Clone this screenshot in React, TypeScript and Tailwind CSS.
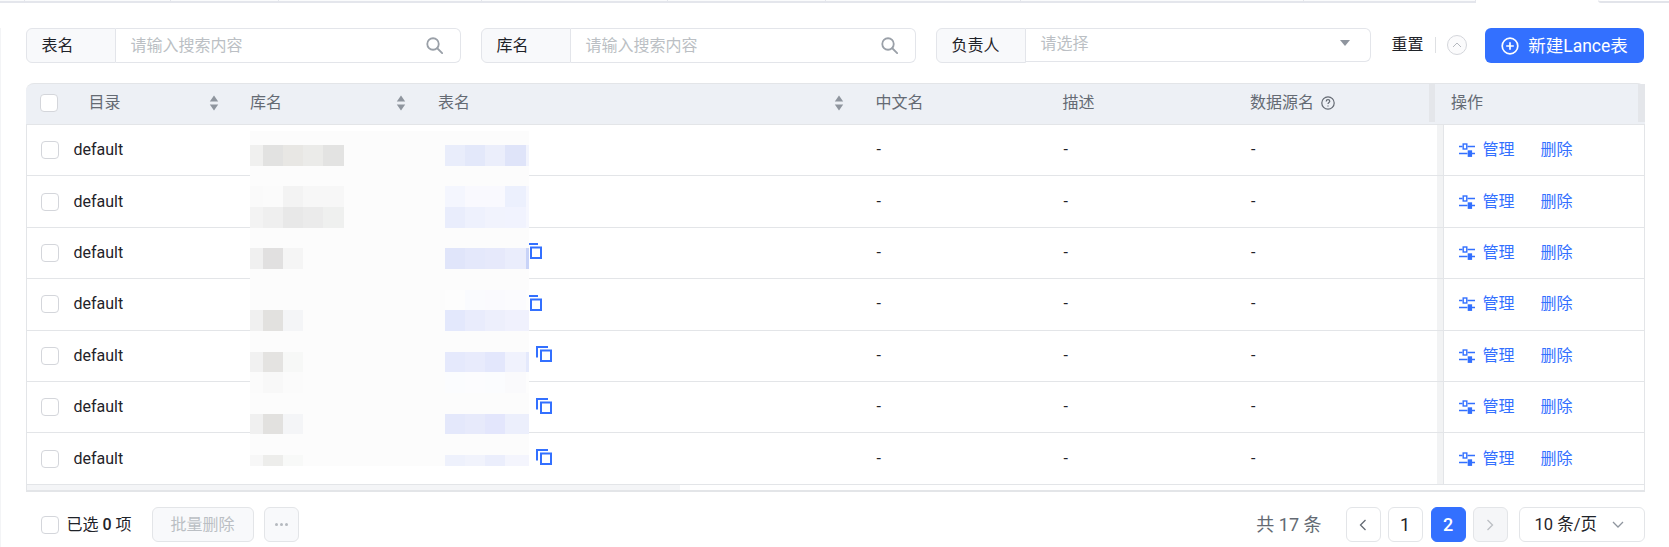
import React from "react";

const BLUE = "#3370ff";

function SearchIcon() {
  return (
    <svg width="17" height="17" viewBox="0 0 16 16" fill="none" stroke="#9aa0a8" strokeWidth="1.7" className="shrink-0">
      <circle cx="6.6" cy="6.6" r="5.4" />
      <path d="M10.6 10.6 15.2 15.2" strokeLinecap="round" />
    </svg>
  );
}

function SortIcon() {
  return (
    <svg width="10" height="16" viewBox="0 0 10 16" fill="#8f959e" className="shrink-0">
      <path d="M5 0.5 9.2 6.5H0.8Z" />
      <path d="M0.8 9.5H9.2L5 15.5Z" />
    </svg>
  );
}

function Checkbox({ className = "" }: { className?: string }) {
  return <span className={"block h-[18px] w-[18px] shrink-0 rounded-[4px] border border-[#d4d6db] bg-white " + className} />;
}

function CopyIcon() {
  return (
    <svg width="16" height="16" viewBox="0 0 16 16" fill="none" stroke={BLUE} strokeWidth="2" className="shrink-0">
      <path d="M12 1H1V11.5" />
      <rect x="5" y="4.5" width="10" height="10.5" />
    </svg>
  );
}

function ManageIcon() {
  return (
    <svg width="16" height="14" viewBox="0 0 16 14" fill="none" stroke={BLUE} strokeWidth="1.4" className="shrink-0">
      <path d="M0 3.5H3.5M8.5 3.5H16M0 10.5H8.5M13 10.5H16" />
      <rect x="4.2" y="1" width="3.6" height="5" fill="#fff" />
      <rect x="9.4" y="8" width="3" height="5.2" fill={BLUE} />
    </svg>
  );
}

function Filter({ label, labelW, placeholder, select }: { label: string; labelW: string; placeholder: string; select?: boolean }) {
  return (
    <div className="flex h-[35px] w-[435px] shrink-0 items-start">
      <div className={"flex h-[35px] shrink-0 items-center rounded-l-[6px] border border-r-[1px] border-[#e3e5ea] bg-[#f8f9fb] pl-[15px] text-[#1f2329] " + labelW}>
        {label}
      </div>
      <div
        className={
          "flex flex-1 items-center justify-between rounded-r-[6px] border border-l-0 border-[#e3e5ea] bg-white pl-[15px] text-[#bbbfc4] " +
          (select ? "h-[34px] pr-[20px]" : "h-[35px] pr-[17px]")
        }
      >
        <span className={select ? "-mt-[2px]" : ""}>{placeholder}</span>
        {select ? (
          <svg width="10" height="6" viewBox="0 0 10 6" fill="#8f959e" className="-mt-[4px]">
            <path d="M0 0H10L5 6Z" />
          </svg>
        ) : (
          <SearchIcon />
        )}
      </div>
    </div>
  );
}

function HeaderCell({ w, children, className = "" }: { w: string; children?: React.ReactNode; className?: string }) {
  return <div className={"flex h-full shrink-0 items-center " + w + " " + className}>{children}</div>;
}

const overlayRows: { gray: string[]; blue: string[] }[] = [
  { gray: ["bg-[#f0f0ef]", "bg-[#e2e2e1]", "bg-[#e8e7e4]", "bg-[#ebebe9]", "bg-[#e3e3e2]"], blue: ["bg-[#e9edfb]", "bg-[#e3e8fa]", "bg-[#ebeefb]", "bg-[#dfe4f9]", "bg-[#f2f4fd]"] },
  { gray: [], blue: [] },
  { gray: ["bg-[#fafafa]", "bg-[#fbfbfb]", "bg-[#f3f3f3]", "bg-[#f7f7f7]", "bg-[#f7f7f7]"], blue: ["bg-[#f4f6fe]", "bg-[#f9f9fe]", "bg-[#f9f9fe]", "bg-[#ecf0fd]", "bg-[#f6f7fe]"] },
  { gray: ["bg-[#f3f3f3]", "bg-[#efefef]", "bg-[#e8e8e8]", "bg-[#ebebeb]", "bg-[#eff0ef]"], blue: ["bg-[#e9edfc]", "bg-[#eef1fd]", "bg-[#f1f3fd]", "bg-[#f1f3fe]", "bg-[#f6f7fe]"] },
  { gray: [], blue: [] },
  { gray: ["bg-[#f0f0f0]", "bg-[#e1e0e0]", "bg-[#f5f5f5]"], blue: ["bg-[#e0e5fa]", "bg-[#e4e8fb]", "bg-[#e6e9fb]", "bg-[#eaedfc]", "bg-[#c8d3f8]"] },
  { gray: [], blue: [] },
  { gray: [], blue: ["bg-[#fdfdfd]", "bg-[#fafbfe]", "bg-[#fafafe]", "bg-[#fbfbfe]", "bg-[#fdfdfd]"] },
  { gray: ["bg-[#f0f0f0]", "bg-[#e2e1df]", "bg-[#f4f5f7]"], blue: ["bg-[#e3e8fc]", "bg-[#e9ecfc]", "bg-[#edeffc]", "bg-[#f0f1fd]", "bg-[#f0f1fd]"] },
  { gray: [], blue: [] },
  { gray: ["bg-[#f1f1f1]", "bg-[#e4e3e1]", "bg-[#f7f8f7]"], blue: ["bg-[#e5e9fc]", "bg-[#e8ebfc]", "bg-[#e3e7fc]", "bg-[#f0f2fd]", "bg-[#e4e9fc]"] },
  { gray: ["bg-[#fbfbfb]", "bg-[#f8f8f8]", "bg-[#fbfbfb]"], blue: ["bg-[#fbfcfe]", "bg-[#fcfcfe]", "bg-[#fbfcfe]", "bg-[#fafafc]", "bg-[#fdfdfd]"] },
  { gray: [], blue: [] },
  { gray: ["bg-[#f0f0f0]", "bg-[#e2e1df]", "bg-[#f4f5f7]"], blue: ["bg-[#e4e8fb]", "bg-[#e7eafb]", "bg-[#e3e6fc]", "bg-[#ecefFc]", "bg-[#ecefFc]"] },
  { gray: [], blue: [] },
  { gray: ["bg-[#f7f7f7]", "bg-[#ededeb]", "bg-[#f8f9f8]"], blue: ["bg-[#eef1fc]", "bg-[#f1f3fc]", "bg-[#ebeefc]", "bg-[#f4f5fd]", "bg-[#f4f5fd]"] },
];

const grayWidths = ["w-[13px]", "w-[20px]", "w-[20px]", "w-[20px]", "w-[21px]"];
const blueWidths = ["w-[20px]", "w-[20px]", "w-[20px]", "w-[21px]", "w-[3px]"];

function BlurOverlay() {
  return (
    <div className="pointer-events-none absolute left-[224.5px] top-[48px] z-10 flex h-[335px] w-[279px] flex-col overflow-hidden bg-[#fcfcfc] pt-[14px]">
      {overlayRows.map((r, i) => (
        <div key={i} className="flex h-[20.67px] shrink-0">
          <div className="flex w-[195px] shrink-0">
            {r.gray.map((c, j) => (
              <div key={j} className={grayWidths[j] + " " + c} />
            ))}
          </div>
          <div className="flex">
            {r.blue.map((c, j) => (
              <div key={j} className={blueWidths[j] + " " + c} />
            ))}
          </div>
        </div>
      ))}
    </div>
  );
}

const copyPad = ["", "", "pl-[87px]", "pl-[87px]", "pl-[97px]", "pl-[97px]", "pl-[97px]"];

function Row({ index }: { index: number }) {
  return (
    <div className="flex h-[51.4px] items-center border-b border-[#e3e5e8] text-[#1f2329]">
      <div className="flex h-full w-[224.5px] shrink-0 items-center pl-[14px]">
        <Checkbox />
        <span className="ml-[15px]">default</span>
      </div>
      <div className="h-full w-[188px] shrink-0" />
      <div className={"flex h-full w-[437.5px] shrink-0 items-center " + copyPad[index]}>
        {copyPad[index] && (
          <span className="-mt-[3px]">
            <CopyIcon />
          </span>
        )}
      </div>
      <div className="w-[187px] shrink-0 leading-none">-</div>
      <div className="w-[187.5px] shrink-0 leading-none">-</div>
      <div className="w-[186px] shrink-0 leading-none">-</div>
      <div className="flex h-full flex-1 items-center border-l-[6px] border-[#f2f3f4]">
        <div className="flex h-full flex-1 items-center border-l border-[#e3e5e8] pl-[14.5px]">
          <ManageIcon />
          <span className="ml-[8px] text-[#3370ff]">管理</span>
          <span className="ml-[26px] text-[#3370ff]">删除</span>
        </div>
      </div>
    </div>
  );
}

function TopStrip() {
  const segments = [
    "w-[25px]",
    "w-[146px]",
    "w-[108px]",
    "w-[203px]",
    "w-[186px]",
    "w-[158px]",
    "w-[195px]",
    "w-[283px]",
    "w-[172px]",
  ];
  return (
    <div className="flex h-[3px] w-full">
      {segments.map((w, i) => (
        <div key={i} className={"h-[3px] shrink-0 border-b-2 border-r border-[#e4e6ec] bg-[#fafbfc] " + w} />
      ))}
      <div className="h-[3px] flex-1 bg-white" />
      <div className="h-[3px] w-[71px] shrink-0 rounded-bl-[3px] border-b-2 border-[#e2e4ea]" />
    </div>
  );
}

function PageBtn({ children, className = "" }: { children: React.ReactNode; className?: string }) {
  return (
    <div className={"flex h-[35px] w-[35px] shrink-0 items-center justify-center rounded-[6px] border text-[18px] " + className}>{children}</div>
  );
}

export default function App() {
  return (
    <div className="h-[547px] w-[1669px] overflow-hidden bg-white font-[Roboto,'Noto_Sans_CJK_SC',sans-serif] text-[16px] leading-[24px]">
      <TopStrip />
      <div className="h-[544px] border-l border-[#f3f4f6] pl-[24.5px] pr-[25px]">
        {/* filters */}
        <div className="mt-[25px] flex h-[35px] items-start pt-0">
          <Filter label="表名" labelW="w-[90px]" placeholder="请输入搜索内容" />
          <div className="w-[20px] shrink-0" />
          <Filter label="库名" labelW="w-[90px]" placeholder="请输入搜索内容" />
          <div className="w-[20px] shrink-0" />
          <Filter label="负责人" labelW="w-[90px]" placeholder="请选择" select />
          <div className="ml-[21px] flex h-[34px] items-center text-[#1f2329]">
            <span className="w-[32px]">重置</span>
            <span className="mx-[11px] h-[16px] w-px bg-[#dee0e3]" />
            <span className="flex h-[20px] w-[20px] items-center justify-center rounded-full border border-[#d4d6db] bg-[#fbfbfc]">
              <svg width="10" height="6" viewBox="0 0 10 6" fill="none" stroke="#b5b9bf" strokeWidth="1">
                <path d="M1 5 5 1 9 5" />
              </svg>
            </span>
          </div>
          <div className="ml-auto flex h-[35px] w-[159px] items-center justify-center gap-[9px] rounded-[6px] bg-[#3370ff] text-[17.5px] text-white">
            <svg width="18" height="18" viewBox="0 0 18 18" fill="none" stroke="#fff" strokeWidth="1.7" className="shrink-0">
              <circle cx="9" cy="9" r="7.8" />
              <path d="M5.2 9H12.8M9 5.2V12.8" />
            </svg>
            <span>新建Lance表</span>
          </div>
        </div>

        {/* table */}
        <div className="relative mt-[20px] w-[1619px]">
          <div className="flex h-[42px] items-center rounded-t-[8px] border-b border-t border-[#e3e5e8] bg-[#edf0f5] pb-[2px] text-[#646a73]">
            <HeaderCell w="w-[224.5px]" className="pl-[14px]">
              <Checkbox />
              <span className="ml-[31px]">目录</span>
              <span className="ml-[88px]">
                <SortIcon />
              </span>
            </HeaderCell>
            <HeaderCell w="w-[188px]">
              <span>库名</span>
              <span className="ml-[114px]">
                <SortIcon />
              </span>
            </HeaderCell>
            <HeaderCell w="w-[437.5px]">
              <span>表名</span>
              <span className="ml-[364px]">
                <SortIcon />
              </span>
            </HeaderCell>
            <HeaderCell w="w-[187px]">中文名</HeaderCell>
            <HeaderCell w="w-[187.5px]">描述</HeaderCell>
            <HeaderCell w="w-[179px]">
              <span>数据源名</span>
              <svg width="14" height="14" viewBox="0 0 14 14" fill="none" stroke="#646a73" strokeWidth="1.2" className="ml-[7px] shrink-0">
                <circle cx="7" cy="7" r="6.2" />
                <path d="M5.2 5.4C5.2 4.3 6 3.7 7 3.7 8 3.7 8.8 4.3 8.8 5.3 8.8 6.5 7 6.6 7 8" />
                <path d="M7 9.4V10.4" />
              </svg>
            </HeaderCell>
            <div className="flex h-full flex-1 items-center border-l-[6px] border-r-[7px] border-l-[#e4e6ea] border-r-[#e4e6ea] pl-[16px]">
              操作
            </div>
          </div>
          <div className="border-l border-r border-[#e3e5e8]">
            {[0, 1, 2, 3, 4, 5, 6].map((i) => (
              <Row key={i} index={i} />
            ))}
            <div className="h-[7px] border-b-2 border-[#e3e5e8]">
              <div className="h-[5px] w-[653px] bg-[#f4f5f7]" />
            </div>
          </div>
          <BlurOverlay />
        </div>

        {/* footer */}
        <div className="mt-[15.5px] flex h-[35px] w-[1619px] items-center">
          <Checkbox className="ml-[15px]" />
          <span className="ml-[8px] text-[#1f2329]">
            已选 <span className="font-medium">0</span> 项
          </span>
          <div className="ml-[20px] flex h-[35px] w-[102px] items-center justify-center rounded-[6px] border border-[#e3e5e8] bg-[#f8f9fb] text-[#bbbfc4]">
            批量删除
          </div>
          <div className="ml-[10px] flex h-[35px] w-[35px] items-center justify-center gap-[2px] rounded-[6px] border border-[#e3e5e8] bg-[#f8f9fb]">
            <span className="h-[3px] w-[3px] rounded-full bg-[#b5b9bf]" />
            <span className="h-[3px] w-[3px] rounded-full bg-[#b5b9bf]" />
            <span className="h-[3px] w-[3px] rounded-full bg-[#b5b9bf]" />
          </div>
          <span className="ml-auto text-[18px] text-[#646a73]">共 17 条</span>
          <PageBtn className="ml-[24px] border-[#e3e5e8] bg-white">
            <svg width="8" height="12" viewBox="0 0 8 12" fill="none" stroke="#646a73" strokeWidth="1.3">
              <path d="M6.5 1 1.5 6 6.5 11" />
            </svg>
          </PageBtn>
          <PageBtn className="ml-[7px] border-[#e3e5e8] bg-white text-[#1f2329]">1</PageBtn>
          <PageBtn className="ml-[8px] border-[#3370ff] bg-[#3370ff] font-medium text-white">2</PageBtn>
          <PageBtn className="ml-[7px] border-[#e3e5e8] bg-[#f5f6f8]">
            <svg width="8" height="12" viewBox="0 0 8 12" fill="none" stroke="#bbbfc4" strokeWidth="1.3">
              <path d="M1.5 1 6.5 6 1.5 11" />
            </svg>
          </PageBtn>
          <div className="ml-[11px] flex h-[35px] w-[126px] items-center justify-between rounded-[6px] border border-[#e3e5e8] bg-white pl-[15px] pr-[20px] text-[16.5px] text-[#1f2329]">
            <span>10 条/页</span>
            <svg width="12" height="7" viewBox="0 0 12 7" fill="none" stroke="#8f959e" strokeWidth="1.3">
              <path d="M1 1 6 6 11 1" />
            </svg>
          </div>
        </div>
      </div>
    </div>
  );
}
